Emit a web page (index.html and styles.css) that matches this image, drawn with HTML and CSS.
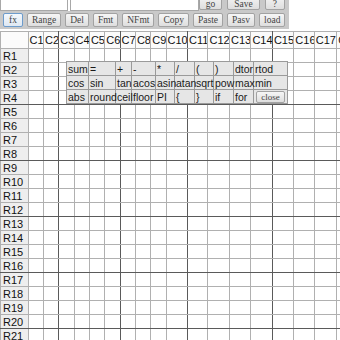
FILE: index.html
```html
<!DOCTYPE html>
<html lang="en">
<head>
    <meta charset="UTF-8">
    <title>Sheet</title>
    <link rel="stylesheet" href="styles.css">
</head>
<body>
    <div class="toolbar">
        <div class="row1">
            <div class="box b1"></div>
            <div class="box b2"></div>
            <div class="cmds">
                <button class="btn">go</button>
                <button class="btn">Save</button>
                <button class="btn">?</button>
            </div>
        </div>
        <div class="row2">
            <button class="btn on">fx</button>
            <button class="btn">Range</button>
            <button class="btn">Del</button>
            <button class="btn">Fmt</button>
            <button class="btn">NFmt</button>
            <button class="btn">Copy</button>
            <button class="btn">Paste</button>
            <button class="btn">Pasv</button>
            <button class="btn">load</button>
        </div>
    </div>

    <div class="sheet">
        <table class="grid" id="grid">
            <colgroup>
                <col style="width:27px">
                <col style="width:15px"><col style="width:15px"><col style="width:15px">
                <col style="width:15px"><col style="width:15px"><col style="width:15px">
                <col style="width:15px"><col style="width:15px"><col style="width:15px">
                <col style="width:21px"><col style="width:20px"><col style="width:21px">
                <col style="width:21px"><col style="width:21px"><col style="width:21px">
                <col style="width:20px"><col style="width:22px"><col style="width:21px">
            </colgroup>
            <tbody id="rows"></tbody>
        </table>

        <table class="funcs">
            <colgroup>
                <col style="width:22px"><col style="width:27px"><col style="width:16px">
                <col style="width:24px"><col style="width:19px"><col style="width:20px">
                <col style="width:19px"><col style="width:20px"><col style="width:20px">
                <col style="width:34px">
            </colgroup>
            <tr>
                <td>sum</td><td>=</td><td>+</td><td>-</td><td>*</td>
                <td>/</td><td>(</td><td>)</td><td>dtor</td><td>rtod</td>
            </tr>
            <tr>
                <td>cos</td><td>sin</td><td>tan</td><td>acos</td><td>asin</td>
                <td>atan</td><td>sqrt</td><td>pow</td><td>max</td><td>min</td>
            </tr>
            <tr>
                <td>abs</td><td>round</td><td>ceil</td><td>floor</td><td>PI</td>
                <td>{</td><td>}</td><td>if</td><td>for</td>
                <td class="closecell"><button class="btn close">close</button></td>
            </tr>
        </table>
    </div>

    <script>
        var tbody = document.getElementById("rows");
        var cols = 18, rows = 22;

        function cls(c) {
            if (c % 4 == 2) return " class='dr'";
            if (c % 4 == 3) return " class='dl'";
            return "";
        }

        var html = "<tr class='head'><th class='corner'></th>";
        for (var c = 1; c <= cols; c++) {
            html += "<th" + cls(c) + ">C" + c + "</th>";
        }
        html += "</tr>";

        for (var r = 1; r <= rows; r++) {
            var rc = "";
            if (r % 4 == 0) rc = " class='db'";
            if (r % 4 == 1 && r > 1) rc = " class='dt'";
            html += "<tr" + rc + "><th class='rh'>R" + r + "</th>";
            for (var c = 1; c <= cols; c++) {
                html += "<td" + cls(c) + "></td>";
            }
            html += "</tr>";
        }
        tbody.innerHTML = html;
    </script>
</body>
</html>
```

FILE: styles.css
```css
* {
    margin: 0;
    padding: 0;
    box-sizing: border-box;
}

html, body {
    width: 100%;
    height: 100%;
    overflow: hidden;
    background: #fff;
}

body {
    font-family: "Liberation Sans", Arial, sans-serif;
    font-size: 11px;
    color: #111;
}

/* toolbar */
.toolbar {
    width: 289px;
}

.row1 {
    display: flex;
    align-items: flex-end;
    height: 11px;
    overflow: hidden;
}

.box {
    height: 22px;
    border: 1px solid #a8a8a8;
    background: #fff;
}

.b1 {
    width: 71px;
}

.b2 {
    width: 135px;
    margin-left: 2px;
}

.cmds {
    flex: 1;
    height: 11px;
    background: #c9c9c9;
    display: flex;
    align-items: flex-end;
    justify-content: flex-end;
    gap: 5px;
    padding: 0 4px 1px 0;
}

.row2 {
    height: 18px;
    background: #c9c9c9;
    display: flex;
    align-items: center;
    gap: 4px;
    padding-left: 3px;
}

.btn {
    height: 14px;
    padding: 0 4px;
    font-family: "Liberation Serif", "Times New Roman", serif;
    font-size: 9.5px;
    line-height: 12px;
    color: #444;
    background: linear-gradient(#f6f6f6, #dedede);
    border: 1px solid #a2a2a2;
    border-radius: 2px;
}

.cmds .btn {
    height: 16px;
    padding: 3px 6px 0;
}

.cmds .btn:last-child {
    padding: 3px 7px 0;
}

.btn.on {
    border-color: #6d9ccc;
    background: linear-gradient(#f4f8fc, #dfe8f2);
    padding: 0 5px;
}

/* sheet */
.sheet {
    position: relative;
    margin-top: 2px;
}

.grid {
    border-collapse: collapse;
    table-layout: fixed;
    width: 359px;
}

.grid th, .grid td {
    border: 1px solid #b0b0b0;
    padding: 0 1px;
    font-weight: normal;
    text-align: left;
    white-space: nowrap;
    overflow: hidden;
    line-height: 12px;
}

.grid tr {
    height: 14px;
}

.grid tr.head {
    height: 17px;
}

.grid .head th {
    background: #fbfbfb;
}

.grid .corner, .grid .rh {
    background: #eeeeee;
}

.grid .rh {
    padding-left: 2px;
}

.grid .dr {
    border-right-color: #5a5a5a;
}

.grid .dl {
    border-left-color: #5a5a5a;
}

.grid tr.db th, .grid tr.db td {
    border-bottom-color: #5a5a5a;
}

.grid tr.dt th, .grid tr.dt td {
    border-top-color: #5a5a5a;
}

/* function palette */
.funcs {
    position: absolute;
    left: 66px;
    top: 30px;
    border-collapse: collapse;
    table-layout: fixed;
    width: 221px;
    background: #e6e6e6;
    font-size: 10.5px;
}

.funcs tr {
    height: 14px;
}

.funcs td {
    border: 1px solid #9a9a9a;
    padding: 0 0 0 1px;
    line-height: 12px;
    white-space: nowrap;
    color: #1a1a1a;
}

.funcs .closecell {
    padding: 0 2px;
}

.close {
    height: 12px;
    width: 29px;
    padding: 0;
    line-height: 10px;
    font-size: 9px;
    display: block;
}
```
